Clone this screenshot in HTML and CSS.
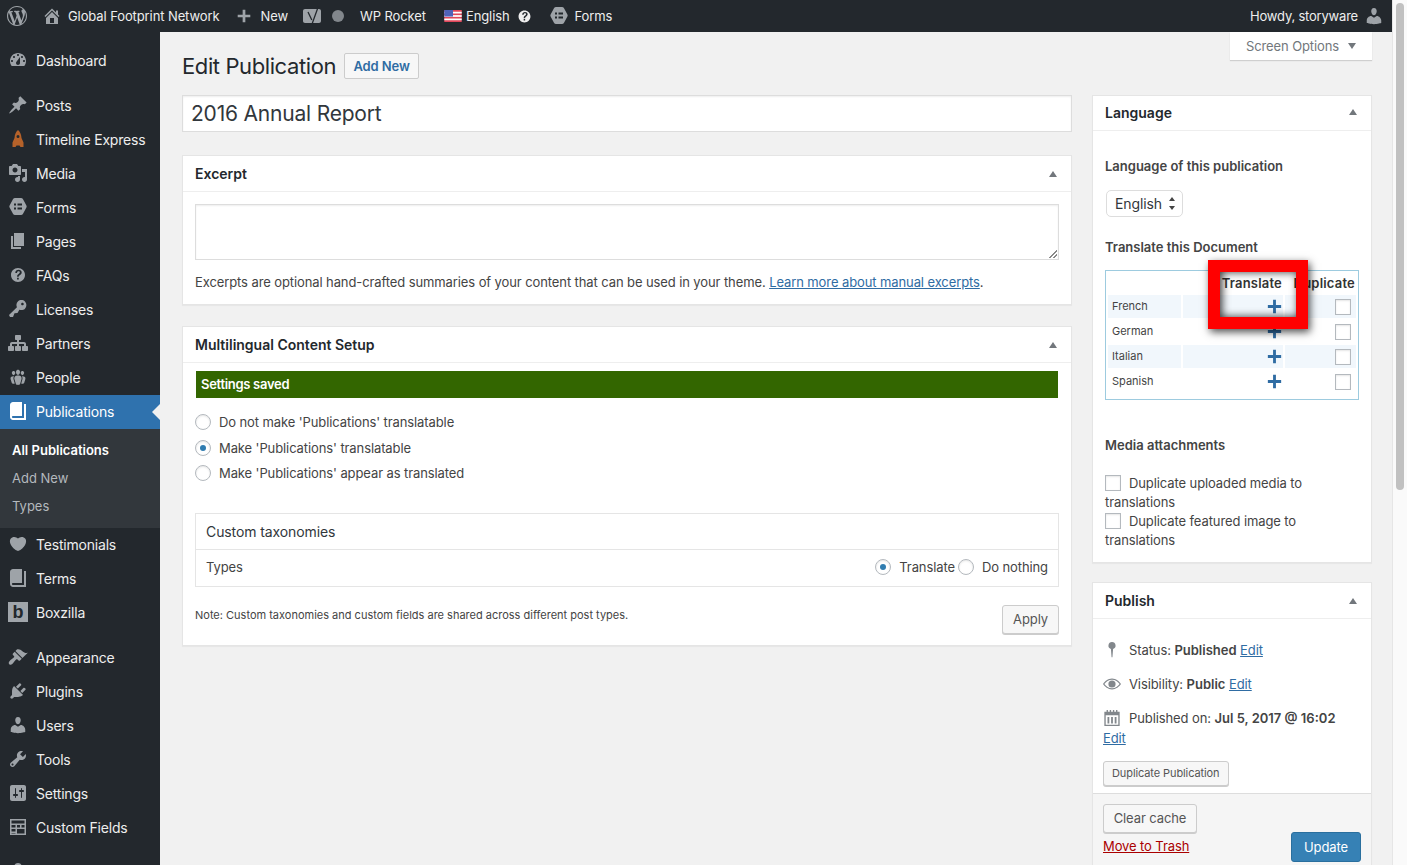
FILE: index.html
```html
<!DOCTYPE html>
<html lang="en">
<head>
    <meta charset="UTF-8">
    <title>Edit Publication</title>
    <link rel="stylesheet" href="styles.css">
</head>
<body>
<svg class="sprites" width="0" height="0">
    <symbol id="i-wp" viewBox="0 0 20 20"><path d="M20 10c0-5.51-4.49-10-10-10C4.48 0 0 4.49 0 10c0 5.52 4.48 10 10 10 5.51 0 10-4.48 10-10zM7.78 15.37L4.37 6.22c.55-.02 1.17-.08 1.17-.08.5-.06.44-1.13-.06-1.11 0 0-1.45.11-2.37.11-.18 0-.37 0-.58-.01C4.12 2.69 6.87 1.11 10 1.11c2.33 0 4.45.87 6.05 2.34-.68-.11-1.65.39-1.65 1.58 0 .74.45 1.36.9 2.1.35.61.55 1.36.55 2.46 0 1.49-1.4 5-1.4 5l-3.03-8.37c.54-.02.82-.17.82-.17.5-.05.44-1.25-.06-1.22 0 0-1.44.12-2.38.12-.87 0-2.33-.12-2.33-.12-.5-.03-.56 1.2-.06 1.22l.92.08 1.26 3.41zM17.41 10c.24-.64.74-1.87.43-4.25.7 1.29 1.05 2.71 1.05 4.25 0 3.29-1.73 6.24-4.4 7.78.97-2.59 1.94-5.2 2.92-7.78zM6.1 18.09C3.12 16.65 1.11 13.53 1.11 10c0-1.3.23-2.48.72-3.59C3.25 10.3 4.67 14.2 6.1 18.09zm4.03-6.63l2.58 6.98c-.86.29-1.76.45-2.71.45-.79 0-1.57-.11-2.29-.33.81-2.38 1.62-4.74 2.42-7.1z"/></symbol>
    <symbol id="i-home" viewBox="0 0 20 20"><path d="M16 8.5l1.53 1.53-1.06 1.06L10 4.62l-6.47 6.47-1.06-1.06L10 2.5l4 4v-2h2v4zm-6-2.46l6 5.99V18H4v-5.97zM12 17v-5H8v5h4z"/></symbol>
    <symbol id="i-plus" viewBox="0 0 20 20"><path d="M17 8.5v3h-5.5V17h-3v-5.500H3v-3h5.500V3h3v5.500z"/></symbol>
    <symbol id="i-yoast" viewBox="0 0 20 20"><path d="M2 3h14c1.100 0 2 .9 2 2v10c0 1.100-.9 2-2 2H2c-1.100 0-2-.9-2-2V5c0-1.100.9-2 2-2z"/><path d="M5 6l3.800 8M15.500 0L8.500 19.500H5" fill="none" stroke="#23282d" stroke-width="1.300"/></symbol>
    <symbol id="i-forms" viewBox="0 0 20 20"><path d="M7 1h6c.8 0 1.500.4 1.900 1.100l3.500 6.300c.4.700.4 1.500 0 2.200l-3.500 6.300c-.4.700-1.100 1.100-1.900 1.100H7c-.8 0-1.500-.4-1.900-1.100L1.600 10.600c-.4-.7-.4-1.500 0-2.200l3.500-6.300C5.500 1.400 6.200 1 7 1zM6 6.500v2h2v-2zm3.500 0v2H14v-2zM6 10.500v2h2v-2zm3.500 0v2H14v-2z" fill-rule="evenodd"/></symbol>
    <symbol id="i-help" viewBox="0 0 20 20"><path d="M17 10c0-3.870-3.140-7-7-7-3.870 0-7 3.130-7 7s3.130 7 7 7c3.860 0 7-3.130 7-7zm-6.300 1.760H9.100c-.04-.74.090-1.310.37-1.710.28-.41.76-.87 1.380-1.370.57-.47.99-.84 1-1.340.01-.56-.51-1.100-1.280-1.100-1.010 0-1.510.66-1.540 1.660H7.290c.04-1.910 1.470-3.050 3.260-3.050 1.830 0 3.150 1.030 3.150 2.640 0 1.050-.53 1.650-1.270 2.240-.7.55-1.640 1.010-1.730 2.030zm.07 2.850H9.030v-1.870h1.740z"/></symbol>
    <symbol id="i-dashboard" viewBox="0 0 20 20"><path d="M3.760 16h12.480c1.100-1.370 1.760-3.110 1.760-5 0-4.420-3.580-8-8-8s-8 3.580-8 8c0 1.890.66 3.630 1.760 5zM10 4c.55 0 1 .45 1 1s-.45 1-1 1-1-.45-1-1 .45-1 1-1zM6 6c.55 0 1 .45 1 1s-.45 1-1 1-1-.45-1-1 .45-1 1-1zm8 0c.55 0 1 .45 1 1s-.45 1-1 1-1-.45-1-1 .45-1 1-1zm-5.370 5.550L12 7v6c0 1.100-.9 2-2 2s-2-.9-2-2c0-.57.24-1.080.63-1.450zM4 10c.55 0 1 .45 1 1s-.45 1-1 1-1-.45-1-1 .45-1 1-1zm12 0c.55 0 1 .45 1 1s-.45 1-1 1-1-.45-1-1 .45-1 1-1z"/></symbol>
    <symbol id="i-post" viewBox="0 0 20 20"><path d="M10.440 3.020l1.820-1.820 6.360 6.350-1.830 1.820c-1.050-.68-2.480-.57-3.410.36l-.75.75c-.92.93-1.040 2.350-.35 3.410l-1.830 1.820-2.410-2.410-2.800 2.790c-.42.42-3.380 2.710-3.800 2.290s1.860-3.390 2.280-3.810l2.790-2.790L4.100 9.360l1.830-1.820c1.050.69 2.480.57 3.400-.36l.75-.75c.93-.92 1.050-2.350.36-3.410z"/></symbol>
    <symbol id="i-rocket" viewBox="0 0 20 20"><path d="M10 1c2.200 2 3.300 4.500 3.500 8l2 4.500V18h-3l-1-1.500h-3l-1 1.500h-3v-4.500l2-4.500C6.700 5.500 7.800 3 10 1zm0 5a1.500 1.500 0 1 0 0 3 1.500 1.500 0 0 0 0-3z" fill-rule="evenodd"/></symbol>
    <symbol id="i-media" viewBox="0 0 20 20"><path d="M13 11V4c0-.55-.45-1-1-1h-1.670L9 1H5L3.670 3H2c-.55 0-1 .45-1 1v7c0 .55.45 1 1 1h10c.55 0 1-.45 1-1zM7 4.500c1.380 0 2.500 1.120 2.500 2.500S8.380 9.500 7 9.500 4.500 8.380 4.500 7 5.620 4.500 7 4.500zM14 6h5v10.500c0 1.380-1.120 2.500-2.500 2.500S14 17.880 14 16.500s1.120-2.500 2.500-2.500c.17 0 .34.02.5.05V9h-3V6zm-4 8.050V13h2v3.500c0 1.380-1.120 2.500-2.500 2.500S7 17.880 7 16.500 8.120 14 9.500 14c.17 0 .34.02.5.05z"/></symbol>
    <symbol id="i-page" viewBox="0 0 20 20"><path d="M6 15V2h10v13H6zm-1 1h8v2H3V5h2v11z"/></symbol>
    <symbol id="i-key" viewBox="0 0 20 20"><path d="M16.950 2.580c1.960 1.950 1.960 5.120 0 7.070-1.510 1.510-3.750 1.840-5.590 1.010l-1.870 3.310-2.990.31L5 18H2l-1-2 7.950-7.690c-.92-1.870-.62-4.180.93-5.730 1.950-1.960 5.120-1.960 7.070 0zm-2.510 3.790c.74 0 1.330-.6 1.330-1.340 0-.73-.59-1.330-1.330-1.330-.73 0-1.330.6-1.330 1.330 0 .74.6 1.340 1.330 1.340z"/></symbol>
    <symbol id="i-network" viewBox="0 0 20 20"><path d="M18 13h1c.55 0 1 .45 1 1.010v2.980c0 .56-.45 1.010-1 1.010h-4c-.55 0-1-.45-1-1.010v-2.980c0-.56.45-1.010 1-1.010h1v-2h-5v2h1c.55 0 1 .45 1 1.010v2.980c0 .56-.45 1.010-1 1.010H8c-.55 0-1-.45-1-1.010v-2.980c0-.56.45-1.010 1-1.010h1v-2H4v2h1c.55 0 1 .45 1 1.010v2.980C6 17.550 5.550 18 5 18H1c-.55 0-1-.45-1-1.010v-2.980C0 13.450.45 13 1 13h1v-2c0-1.100.9-2 2-2h5V7H8c-.55 0-1-.45-1-1.010V3.010C7 2.450 7.450 2 8 2h4c.55 0 1 .45 1 1.010v2.980C13 6.550 12.550 7 12 7h-1v2h5c1.100 0 2 .9 2 2v2z"/></symbol>
    <symbol id="i-groups" viewBox="0 0 20 20"><path d="M8.030 4.460c-.29 1.280.55 3.460 1.970 3.460 1.410 0 2.250-2.180 1.960-3.460-.22-.98-1.080-1.630-1.960-1.630-.89 0-1.740.65-1.970 1.630zm-4.130.9c-.25 1.080.47 2.930 1.670 2.930s1.920-1.850 1.670-2.930c-.19-.83-.92-1.390-1.670-1.390s-1.480.56-1.670 1.390zm8.860 0c-.25 1.080.47 2.930 1.660 2.930 1.200 0 1.920-1.850 1.670-2.930-.19-.83-.92-1.390-1.670-1.390-.74 0-1.470.56-1.660 1.390zm-.59 11.430l1.250-4.300C14.200 10 12.710 8.470 10 8.470c-2.720 0-4.210 1.530-3.440 4.020l1.260 4.300C8.050 17.51 9 18 10 18c.98 0 1.940-.49 2.170-1.210zM6.070 9.160c-.49.67-.96 1.830-.42 3.590l1.120 3.790c-.34.2-.77.31-1.200.31-.85 0-1.650-.41-1.850-1.030l-1.070-3.650c-.65-2.110.61-3.010 2.920-3.010zm8.310 0c2.310 0 3.570.9 2.920 3.010l-1.070 3.650c-.2.620-1 1.030-1.850 1.030-.43 0-.86-.11-1.200-.31l1.110-3.790c.55-1.760.08-2.920-.41-3.590z"/></symbol>
    <symbol id="i-book" viewBox="0 0 20 20"><path d="M16 3h2v16H5c-1.660 0-3-1.340-3-3V4c0-1.660 1.340-3 3-3h9v14H5c-.55 0-1 .45-1 1s.45 1 1 1h11V3z"/></symbol>
    <symbol id="i-heart" viewBox="0 0 20 20"><path d="M10 17.120c3.330-1.400 5.740-3.790 7.040-6.210 1.280-2.410 1.460-4.810.32-6.250-1.030-1.290-2.370-1.780-3.730-1.740s-2.680.63-3.630 1.460c-.95-.83-2.270-1.420-3.630-1.460s-2.700.45-3.730 1.740c-1.140 1.440-.96 3.840.34 6.250 1.280 2.420 3.690 4.810 7.020 6.210z"/></symbol>
    <symbol id="i-brush" viewBox="0 0 20 20"><path d="M14.480 11.060L7.410 3.990l1.500-1.500c.5-.56 2.300-.47 3.510.32 1.210.8 1.430 1.280 2.910 2.100 1.180.64 2.450 1.260 4.450.85zm-.71.71L6.700 4.700 4.930 6.470c-.39.39-.39 1.020 0 1.410l1.060 1.060c.39.39.39 1.030 0 1.420-.6.6-3.500 2.800-4.500 3.800-1 1-.9 2.300-.2 3 .7.7 2 .8 3-.2s3.200-3.900 3.800-4.500c.39-.39 1.030-.39 1.420 0l1.060 1.060c.39.39 1.020.39 1.410 0z"/></symbol>
    <symbol id="i-plugin" viewBox="0 0 20 20"><path d="M13.110 4.360L9.870 7.600 8 5.730l3.240-3.240c.35-.34 1.050-.2 1.560.32.52.51.66 1.210.31 1.550zm-8 1.770l.91-1.120 9.010 9.010-1.190.84c-.71.71-2.630 1.160-3.820 1.160H6.140L4.900 17.260c-.59.59-1.540.59-2.120 0-.59-.58-.59-1.530 0-2.120l1.240-1.240v-3.880c0-1.130.4-3.190 1.090-3.890zm7.260 3.970l3.240-3.240c.34-.35 1.040-.21 1.550.31.52.51.66 1.210.31 1.550l-3.240 3.250z"/></symbol>
    <symbol id="i-user" viewBox="0 0 20 20"><path d="M10 9.250c-2.270 0-2.730-3.440-2.730-3.440C7 4.020 7.820 2 9.970 2c2.160 0 2.980 2.020 2.710 3.810 0 0-.41 3.440-2.680 3.440zm0 2.570L12.720 10c2.390 0 4.520 2.330 4.520 4.530v2.490s-3.650 1.130-7.240 1.130c-3.650 0-7.240-1.130-7.240-1.130v-2.490c0-2.250 1.940-4.480 4.470-4.480z"/></symbol>
    <symbol id="i-tools" viewBox="0 0 20 20"><path d="M16.680 9.770c-1.340 1.340-3.300 1.670-4.950.99l-5.410 6.520c-.99.99-2.590.99-3.580 0s-.99-2.590 0-3.570l6.520-5.420c-.68-1.650-.35-3.610.99-4.950 1.280-1.280 3.120-1.620 4.720-1.060l-2.890 2.890 2.820 2.820 2.860-2.870c.53 1.580.18 3.390-1.080 4.650zM3.810 16.210c.4.39 1.040.39 1.430 0 .4-.4.4-1.040 0-1.430-.39-.4-1.030-.4-1.430 0-.39.39-.39 1.030 0 1.430z"/></symbol>
    <symbol id="i-settings" viewBox="0 0 20 20"><path d="M18 16V4c0-1.100-.9-2-2-2H4c-1.100 0-2 .9-2 2v12c0 1.100.9 2 2 2h12c1.100 0 2-.9 2-2zM8 11h1c.55 0 1 .45 1 1s-.45 1-1 1H8v1.500c0 .28-.22.5-.5.5s-.5-.22-.5-.5V13H6c-.55 0-1-.45-1-1s.45-1 1-1h1V5.500c0-.28.22-.5.5-.5s.5.22.5.5V11zm5-2h-1c-.55 0-1-.45-1-1s.45-1 1-1h1V5.500c0-.28.22-.5.5-.5s.5.22.5.5V7h1c.55 0 1 .45 1 1s-.45 1-1 1h-1v5.500c0 .28-.22.5-.5.5s-.5-.22-.5-.5V9z"/></symbol>
    <symbol id="i-fields" viewBox="0 0 20 20"><path d="M2 2h16v16H2zm1.500 1.500v3h13v-3zm0 4.500v2.500h4V8zm5.500 0v2.500h3V8zm4.500 0v2.500h3V8zM3.500 12v2.500h4V12zm5.500 0v4.500h7.500V12zm-5.500 4v.5h4V16z" fill-rule="evenodd"/></symbol>
    <symbol id="i-pin" viewBox="0 0 20 20"><path d="M10 1a4 4 0 0 1 1.200 7.800L10.500 18h-1l-.7-9.200A4 4 0 0 1 10 1z"/></symbol>
    <symbol id="i-eye" viewBox="0 0 20 20"><path d="M10 4c4.500 0 8 3.200 10 6-2 2.800-5.500 6-10 6S2 12.800 0 10c2-2.800 5.500-6 10-6zm0 1.200C6.300 5.200 3.300 7.500 1.500 10c1.800 2.500 4.800 4.800 8.500 4.800s6.700-2.300 8.500-4.800c-1.800-2.500-4.800-4.800-8.500-4.800zM10 6a4 4 0 1 1 0 8 4 4 0 0 1 0-8z" fill-rule="evenodd"/></symbol>
    <symbol id="i-cal" viewBox="0 0 20 20"><path d="M4 1h1.500v2h2V1H9v2h2V1h1.500v2h2V1H16v2h2.500v16h-17V3H4zM3 7v10.500h14V7zm2 2h2v7H5zm4 0h2v7H9zm4 0h2v7h-2z" fill-rule="evenodd"/></symbol>
</svg>

<div class="screen">
    <div class="viewport">
        <header class="adminbar">
            <a class="bar-item bar-logo"><svg class="icon"><use href="#i-wp"/></svg></a>
            <a class="bar-item bar-site"><svg class="icon"><use href="#i-home"/></svg>Global Footprint Network</a>
            <a class="bar-item bar-new"><svg class="icon icon-new"><use href="#i-plus"/></svg>New</a>
            <a class="bar-item bar-yoast"><svg class="icon"><use href="#i-yoast"/></svg><span class="dot"></span></a>
            <a class="bar-item bar-rocket">WP Rocket</a>
            <a class="bar-item bar-lang">
                <svg class="flag" viewBox="0 0 16 11"><rect width="16" height="11" fill="#e0475a"/><rect y="1.600" width="16" height="1.600" fill="#fff"/><rect y="4.700" width="16" height="1.600" fill="#fff"/><rect y="7.800" width="16" height="1.600" fill="#fff"/><rect width="8" height="6" fill="#4f62b8"/></svg>
                English<svg class="icon-small"><use href="#i-help"/></svg>
            </a>
            <a class="bar-item bar-forms"><svg class="icon"><use href="#i-forms"/></svg>Forms</a>
            <a class="bar-item bar-howdy">Howdy, storyware<svg class="icon"><use href="#i-user"/></svg></a>
        </header>

        <div class="layout">
            <nav class="sidebar">
                <ul class="menu">
                    <li class="menu-item"><svg class="icon"><use href="#i-dashboard"/></svg>Dashboard</li>
                    <li class="menu-sep"></li>
                    <li class="menu-item"><svg class="icon"><use href="#i-post"/></svg>Posts</li>
                    <li class="menu-item"><svg class="icon icon-rocket"><use href="#i-rocket"/></svg>Timeline Express</li>
                    <li class="menu-item"><svg class="icon"><use href="#i-media"/></svg>Media</li>
                    <li class="menu-item"><svg class="icon"><use href="#i-forms"/></svg>Forms</li>
                    <li class="menu-item"><svg class="icon"><use href="#i-page"/></svg>Pages</li>
                    <li class="menu-item"><svg class="icon"><use href="#i-help"/></svg>FAQs</li>
                    <li class="menu-item"><svg class="icon"><use href="#i-key"/></svg>Licenses</li>
                    <li class="menu-item"><svg class="icon"><use href="#i-network"/></svg>Partners</li>
                    <li class="menu-item"><svg class="icon"><use href="#i-groups"/></svg>People</li>
                    <li class="menu-item menu-current"><svg class="icon"><use href="#i-book"/></svg>Publications</li>
                    <li class="submenu">
                        <a class="submenu-current">All Publications</a>
                        <a>Add New</a>
                        <a>Types</a>
                    </li>
                    <li class="menu-item"><svg class="icon"><use href="#i-heart"/></svg>Testimonials</li>
                    <li class="menu-item"><svg class="icon"><use href="#i-book"/></svg>Terms</li>
                    <li class="menu-item"><span class="boxzilla">b</span>Boxzilla</li>
                    <li class="menu-sep"></li>
                    <li class="menu-item"><svg class="icon"><use href="#i-brush"/></svg>Appearance</li>
                    <li class="menu-item"><svg class="icon"><use href="#i-plugin"/></svg>Plugins</li>
                    <li class="menu-item"><svg class="icon"><use href="#i-user"/></svg>Users</li>
                    <li class="menu-item"><svg class="icon"><use href="#i-tools"/></svg>Tools</li>
                    <li class="menu-item"><svg class="icon"><use href="#i-settings"/></svg>Settings</li>
                    <li class="menu-item"><svg class="icon"><use href="#i-fields"/></svg>Custom Fields</li>
                    <li class="menu-sep"></li>
                    <li class="menu-item"><svg class="icon"><use href="#i-pin"/></svg></li>
                </ul>
            </nav>

            <main class="content">
                <div class="screen-options-row">
                    <a class="screen-options">Screen Options<span class="arrow-down"></span></a>
                </div>
                <div class="heading-row">
                    <h1>Edit Publication</h1>
                    <a class="add-new">Add New</a>
                </div>
                <div class="columns">
                    <div class="col-main">
                        <div class="title-input">2016 Annual Report</div>

                        <section class="box">
                            <h2 class="box-head">Excerpt<span class="arrow-up"></span></h2>
                            <div class="excerpt-body">
                                <div class="textarea"></div>
                                <p class="excerpt-help">Excerpts are optional hand-crafted summaries of your content that can be used in your theme. <a class="link">Learn more about manual excerpts</a>.</p>
                            </div>
                        </section>

                        <section class="box">
                            <h2 class="box-head">Multilingual Content Setup<span class="arrow-up"></span></h2>
                            <div class="ml-body">
                                <div class="saved">Settings saved</div>
                                <ul class="radio-list">
                                    <li><span class="radio"></span>Do not make 'Publications' translatable</li>
                                    <li><span class="radio radio-on"></span>Make 'Publications' translatable</li>
                                    <li><span class="radio"></span>Make 'Publications' appear as translated</li>
                                </ul>
                                <div class="tax-table">
                                    <div class="tax-head">Custom taxonomies</div>
                                    <div class="tax-row">
                                        <span>Types</span>
                                        <span class="tax-options">
                                            <span class="radio radio-on"></span><span class="tax-label">Translate</span>
                                            <span class="radio"></span><span>Do nothing</span>
                                        </span>
                                    </div>
                                </div>
                                <div class="note-row">
                                    <span class="note">Note: Custom taxonomies and custom fields are shared across different post types.</span>
                                    <a class="button">Apply</a>
                                </div>
                            </div>
                        </section>
                    </div>

                    <aside class="col-side">
                        <section class="box box-lang">
                            <h2 class="box-head">Language<span class="arrow-up"></span></h2>
                            <div class="lang-body">
                                <h4 class="lang-label">Language of this publication</h4>
                                <div class="select">English<span class="updown"></span></div>
                                <h4 class="lang-label translate-label">Translate this Document</h4>
                                <div class="translate-wrap">
                                    <table class="translate">
                                        <tr>
                                            <th class="c-name"></th>
                                            <th class="c-tr">Translate</th>
                                            <th class="c-dup">Duplicate</th>
                                        </tr>
                                        <tr class="odd"><td>French</td><td class="c-plus"><svg class="plus"><use href="#i-plus"/></svg></td><td class="c-check"><span class="checkbox"></span></td></tr>
                                        <tr><td>German</td><td class="c-plus"><svg class="plus"><use href="#i-plus"/></svg></td><td class="c-check"><span class="checkbox"></span></td></tr>
                                        <tr class="odd"><td>Italian</td><td class="c-plus"><svg class="plus"><use href="#i-plus"/></svg></td><td class="c-check"><span class="checkbox"></span></td></tr>
                                        <tr><td>Spanish</td><td class="c-plus"><svg class="plus"><use href="#i-plus"/></svg></td><td class="c-check"><span class="checkbox"></span></td></tr>
                                    </table>
                                    <div class="callout"></div>
                                </div>
                                <h4 class="lang-label media-label">Media attachments</h4>
                                <p class="check-line"><span class="checkbox"></span>Duplicate uploaded media to translations</p>
                                <p class="check-line"><span class="checkbox"></span>Duplicate featured image to translations</p>
                            </div>
                        </section>

                        <section class="box box-publish">
                            <h2 class="box-head">Publish<span class="arrow-up"></span></h2>
                            <div class="publish-body">
                                <p class="pub-line"><svg class="pub-icon"><use href="#i-pin"/></svg>Status: <b>Published</b> <a class="link">Edit</a></p>
                                <p class="pub-line"><svg class="pub-icon"><use href="#i-eye"/></svg>Visibility: <b>Public</b> <a class="link">Edit</a></p>
                                <p class="pub-line pub-date"><svg class="pub-icon"><use href="#i-cal"/></svg>Published on: <b>Jul 5, 2017 @ 16:02</b><br><a class="link">Edit</a></p>
                                <a class="button button-small">Duplicate Publication</a>
                            </div>
                            <div class="publish-actions">
                                <div class="actions-left">
                                    <a class="button button-cache">Clear cache</a>
                                    <a class="trash">Move to Trash</a>
                                </div>
                                <a class="button-primary">Update</a>
                            </div>
                        </section>
                    </aside>
                </div>
            </main>
        </div>
    </div>
    <div class="scrollbar"><div class="thumb"></div></div>
</div>
</body>
</html>
```

FILE: styles.css
```css
* {
    box-sizing: border-box;
}
html, body {
    margin: 0;
    height: 865px;
    overflow: hidden;
}
body {
    font-family: Inter, "Liberation Sans", sans-serif;
    font-size: 13px;
    letter-spacing: -.1px;
    color: #444;
    background: #f1f1f1;
}
ul {
    list-style: none;
    margin: 0;
    padding: 0;
}
p, h1, h2, h4 {
    margin: 0;
}
.sprites {
    position: absolute;
}
.screen {
    display: flex;
    height: 865px;
}
.viewport {
    width: 1392px;
    height: 865px;
    overflow: hidden;
}

/* scrollbar */
.scrollbar {
    width: 15px;
    padding: 3px 3px 0 3px;
    background: #fafafa;
    border-left: 1px solid #e6e6e6;
}
.thumb {
    height: 487px;
    background: #c1c1c1;
    border-radius: 4px;
}

/* admin bar */
.adminbar {
    display: flex;
    align-items: center;
    height: 32px;
    background: #23282d;
    color: #eee;
    font-size: 13px;
}
.bar-item {
    display: flex;
    align-items: center;
}
.adminbar .icon {
    width: 20px;
    height: 20px;
    fill: #9ea3a8;
}
.bar-logo {
    margin-left: 7px;
}
.bar-site {
    margin-left: 15px;
    gap: 6px;
}
.bar-new {
    margin-left: 16px;
    gap: 7px;
}
.adminbar .icon-new {
    width: 18px;
    height: 18px;
}
.bar-yoast {
    margin-left: 15px;
    gap: 9px;
}
.dot {
    width: 12px;
    height: 12px;
    border-radius: 50%;
    background: #82878c;
}
.bar-rocket {
    margin-left: 16px;
}
.bar-lang {
    margin-left: 18px;
    gap: 4px;
}
.flag {
    width: 18px;
    height: 12px;
}
.icon-small {
    width: 17px;
    height: 17px;
    fill: #eee;
    margin-left: 2px;
}
.bar-forms {
    margin-left: 16px;
    gap: 6px;
}
.bar-howdy {
    margin-left: auto;
    margin-right: 8px;
    gap: 6px;
    letter-spacing: -.2px;
}

/* sidebar */
.layout {
    display: flex;
}
.sidebar {
    width: 160px;
    height: 833px;
    flex: none;
    overflow: hidden;
    background: #23282d;
    color: #eee;
    font-size: 14px;
    letter-spacing: -.2px;
    padding-top: 12px;
}
.menu-item {
    position: relative;
    display: flex;
    align-items: center;
    height: 34px;
    padding: 0 0 2px 8px;
}
.menu-item .icon {
    width: 20px;
    height: 20px;
    margin-right: 8px;
    flex: none;
    fill: #9ea3a8;
}
.menu-item .icon-rocket {
    fill: #b5622a;
}
.menu-sep {
    height: 11px;
}
.menu-current {
    background: #2f72ae;
    color: #fff;
}
.menu-item.menu-current .icon {
    fill: #fff;
}
.menu-current::after {
    content: "";
    position: absolute;
    right: 0;
    top: 9px;
    border: 8px solid transparent;
    border-right-color: #f1f1f1;
    border-left: 0;
}
.submenu {
    height: 99px;
    padding: 7px 0;
    background: #32373c;
    font-size: 13px;
    letter-spacing: 0;
    color: #b4b9be;
}
.submenu a {
    display: block;
    height: 28px;
    line-height: 28px;
    padding-left: 12px;
}
.submenu .submenu-current {
    color: #fff;
    font-weight: 600;
}
.boxzilla {
    display: block;
    width: 20px;
    height: 20px;
    margin-right: 8px;
    background: #a0a5aa;
    color: #23282d;
    font: bold 18px/20px "Liberation Sans", sans-serif;
    text-align: center;
}

/* main content */
.content {
    position: relative;
    flex: 1;
    padding: 0 20px 0 22px;
    min-width: 0;
}
.screen-options-row {
    position: absolute;
    right: 20px;
    top: 0;
}
.screen-options {
    display: flex;
    align-items: center;
    justify-content: center;
    gap: 9px;
    width: 142px;
    height: 28px;
    background: #fff;
    color: #72777c;
    box-shadow: 0 1px 1px rgba(0, 0, 0, .14);
}
.arrow-down {
    border: 4px solid transparent;
    border-top: 6px solid #72777c;
    border-bottom: 0;
}
.heading-row {
    display: flex;
    align-items: center;
    height: 63px;
    padding-top: 5px;
    gap: 8px;
}
h1 {
    font-size: 22px;
    font-weight: 400;
    letter-spacing: -.4px;
    color: #23282d;
}
.add-new {
    display: flex;
    align-items: center;
    justify-content: center;
    width: 75px;
    height: 26px;
    border: 1px solid #ccc;
    border-radius: 2px;
    background: #f7f7f7;
    color: #2f6ca3;
    font-weight: 600;
}
.columns {
    display: flex;
    gap: 20px;
}
.col-main {
    width: 890px;
    flex: none;
}
.col-side {
    width: 280px;
    flex: none;
}
.title-input {
    height: 37px;
    margin-bottom: 23px;
    padding-left: 8px;
    border: 1px solid #ddd;
    background: #fff;
    color: #32373c;
    font-size: 21px;
    letter-spacing: -.2px;
    line-height: 35px;
    box-shadow: inset 0 1px 2px rgba(0, 0, 0, .07);
}
.box {
    margin-bottom: 21px;
    border: 1px solid #e5e5e5;
    background: #fff;
    box-shadow: 0 1px 1px rgba(0, 0, 0, .04);
}
.box-head {
    display: flex;
    align-items: center;
    justify-content: space-between;
    height: 36px;
    padding: 0 14px 0 12px;
    border-bottom: 1px solid #eee;
    color: #23282d;
    font-size: 14px;
    font-weight: 600;
    letter-spacing: 0;
}
.box-lang {
    margin-bottom: 19px;
}
.box-lang .box-head {
    height: 35px;
    padding-bottom: 2px;
}
.arrow-up {
    border: 4px solid transparent;
    border-bottom: 6px solid #72777c;
    border-top: 0;
}
.excerpt-body {
    padding: 12px 12px 14px;
}
.textarea {
    position: relative;
    height: 56px;
    border: 1px solid #ddd;
    background: #fff;
    box-shadow: inset 0 1px 2px rgba(0, 0, 0, .07);
}
.textarea::after {
    content: "";
    position: absolute;
    right: 1px;
    bottom: 1px;
    width: 8px;
    height: 8px;
    background: linear-gradient(135deg, transparent 50%, #888 50%, #888 58%, transparent 58%, transparent 74%, #888 74%, #888 82%, transparent 82%);
}
.excerpt-help {
    margin-top: 14px;
    line-height: 16px;
}
.link {
    color: #2f6ca3;
    text-decoration: underline;
}
.ml-body {
    padding: 8px 12px 11px;
}
.saved {
    height: 27px;
    margin: 0 1px;
    padding-left: 5px;
    background: #336600;
    color: #fff;
    font-weight: 600;
    letter-spacing: -.3px;
    line-height: 27px;
}
.radio-list {
    margin-top: 11.400px;
    margin-bottom: -.400px;
}
.radio-list li {
    display: flex;
    align-items: center;
    height: 25.500px;
    gap: 8px;
}
.radio {
    position: relative;
    display: inline-block;
    width: 16px;
    height: 16px;
    flex: none;
    border: 1px solid #b4b9be;
    border-radius: 50%;
    background: #fff;
    box-shadow: inset 0 1px 2px rgba(0, 0, 0, .1);
}
.radio-on::after {
    content: "";
    position: absolute;
    left: 4px;
    top: 4px;
    width: 6px;
    height: 6px;
    border-radius: 50%;
    background: #2f7cb0;
}
.tax-table {
    margin-top: 27px;
    border: 1px solid #e5e5e5;
}
.tax-head {
    height: 36px;
    padding-left: 10px;
    border-bottom: 1px solid #e5e5e5;
    color: #32373c;
    font-size: 14px;
    line-height: 35px;
}
.tax-row {
    display: flex;
    align-items: center;
    justify-content: space-between;
    height: 36px;
    padding: 0 10px 1px;
}
.tax-options {
    display: flex;
    align-items: center;
}
.tax-options .radio {
    margin-right: 8px;
}
.tax-label {
    margin-right: 3px;
}
.note-row {
    display: flex;
    align-items: flex-start;
    justify-content: space-between;
    margin-top: 18px;
}
.note {
    font-size: 11px;
    letter-spacing: 0;
    line-height: 20px;
}
.button {
    display: inline-block;
    height: 29px;
    padding: 0 10px;
    border: 1px solid #ccc;
    border-radius: 3px;
    background: #f7f7f7;
    color: #555;
    line-height: 27px;
    box-shadow: 0 1px 0 #ccc;
}

/* language box */
.lang-body {
    padding: 0 12px 12px;
}
.lang-label {
    color: #444;
    font-size: 13px;
    font-weight: 600;
    letter-spacing: 0;
}
.lang-body > .lang-label:first-child {
    padding-top: 27px;
}
.select {
    display: flex;
    align-items: center;
    justify-content: space-between;
    width: 77px;
    height: 27px;
    margin: 16px 0 0 1px;
    padding: 0 6px 0 8px;
    border: 1px solid #ddd;
    border-radius: 5px;
    color: #32373c;
    font-size: 14px;
}
.updown {
    position: relative;
    width: 7px;
    height: 11px;
}
.updown::before, .updown::after {
    content: "";
    position: absolute;
    left: 0;
    border: 3.500px solid transparent;
}
.updown::before {
    top: -1px;
    border-bottom: 4px solid #444;
    border-top: 0;
}
.updown::after {
    bottom: -1px;
    border-top: 4px solid #444;
    border-bottom: 0;
}
.translate-label {
    margin-top: 22px;
    line-height: 16px;
}
.translate-wrap {
    position: relative;
    margin-top: 15px;
    width: 254px;
    height: 130px;
    border: 1px solid #9dcbdf;
}
.translate {
    width: 100%;
    border-spacing: 2px;
    font-size: 11px;
    letter-spacing: 0;
    table-layout: fixed;
}
.translate th {
    height: 20px;
    padding: 0;
    color: #333;
    font-size: 13px;
    font-weight: 600;
    letter-spacing: .2px;
    line-height: 16px;
    text-align: right;
    white-space: nowrap;
}
.translate .c-tr {
    padding-right: 1px;
}
.translate td {
    height: 23px;
    padding: 0 0 1px 4px;
}
.translate .odd td {
    background: #f1f7fc;
}
.c-name {
    width: 73px;
}
.c-tr {
    width: 100px;
}
.translate .c-dup {
    padding-right: 1px;
}
.translate .c-plus {
    text-align: right;
    padding: 0;
    line-height: 0;
}
.plus {
    width: 19px;
    height: 19px;
    margin-right: -1px;
    fill: #2f6ca3;
}
.translate .c-check {
    padding: 0 5px 0 0;
    text-align: right;
    line-height: 0;
}
.checkbox {
    display: inline-block;
    width: 16px;
    height: 16px;
    border: 1px solid #b4b9be;
    background: #fff;
    box-shadow: inset 0 1px 2px rgba(0, 0, 0, .1);
}
.callout {
    position: absolute;
    left: 102px;
    top: -11px;
    width: 100px;
    height: 69px;
    border: 12px solid #f00;
    box-shadow: 2px 3px 8px rgba(0, 0, 0, .7), inset 2px 0 9px rgba(0, 0, 0, .8);
}
.media-label {
    margin-top: 37px;
    margin-bottom: 21px;
}
.check-line {
    line-height: 19px;
}
.check-line .checkbox {
    margin-right: 8px;
    vertical-align: -3px;
}

/* publish box */
.publish-body {
    padding: 7px 10px 7px;
}
.pub-line {
    line-height: 20px;
    padding-top: 14px;
}
.pub-line b {
    font-weight: 600;
    letter-spacing: 0;
}
.pub-icon {
    width: 18px;
    height: 18px;
    margin-right: 8px;
    fill: #82878c;
    vertical-align: -4px;
}
.pub-date {
    margin-bottom: 13px;
}
.button-small {
    height: 25px;
    padding: 0 8px;
    font-size: 11px;
    line-height: 23px;
}
.publish-actions {
    display: flex;
    align-items: flex-start;
    justify-content: space-between;
    padding: 10px 10px 10px;
    border-top: 1px solid #ddd;
    background: #f5f5f5;
}
.actions-left {
    display: flex;
    flex-direction: column;
    align-items: flex-start;
    gap: 5px;
}
.button-cache {
    width: 94px;
    padding: 0;
    text-align: center;
}
.trash {
    color: #a00;
    text-decoration: underline;
}
.button-primary {
    width: 70px;
    height: 30px;
    margin-top: 28px;
    border: 1px solid #2a6f9e;
    border-radius: 3px;
    background: #3681b5;
    color: #fff;
    line-height: 28px;
    text-align: center;
}
```
